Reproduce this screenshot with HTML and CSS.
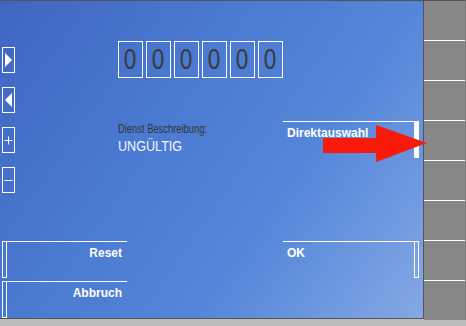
FILE: index.html
```html
<!DOCTYPE html>
<html lang="de">

<head>
    <meta charset="UTF-8">
    <meta name="viewport" content="width=device-width, initial-scale=1.0">
    <title>Dienst Eingabe</title>
    <link rel="stylesheet" href="styles.css">
</head>

<body>
    <div class="topline"></div>
    <div class="screen">
        <div class="panel">
            <div class="upper">
                <div class="side">
                    <div class="key">
                        <svg width="11" height="24" viewBox="0 0 11 24"><polygon points="2,5 9,12 2,19" fill="#fff" /></svg>
                    </div>
                    <div class="key">
                        <svg width="11" height="24" viewBox="0 0 11 24"><polygon points="9,5 2,12 9,19" fill="#fff" /></svg>
                    </div>
                    <div class="key">
                        <svg width="11" height="24" viewBox="0 0 11 24"><path d="M1.5 12.5H9.5M5.5 8.5V16.5" stroke="#fff" stroke-width="1" /></svg>
                    </div>
                    <div class="key">
                        <svg width="11" height="24" viewBox="0 0 11 24"><path d="M1.5 12.5H9.5" stroke="#fff" stroke-width="1" /></svg>
                    </div>
                </div>

                <div class="center">
                    <div class="digits">
                        <span class="digit"><span class="narrow">0</span></span>
                        <span class="digit"><span class="narrow">0</span></span>
                        <span class="digit"><span class="narrow">0</span></span>
                        <span class="digit"><span class="narrow">0</span></span>
                        <span class="digit"><span class="narrow">0</span></span>
                        <span class="digit"><span class="narrow">0</span></span>
                    </div>
                    <div class="desc">
                        <div class="desc-label"><span class="narrow">Dienst Beschreibung:</span></div>
                        <div class="desc-value"><span class="narrow">UNGÜLTIG</span></div>
                    </div>
                </div>

                <div class="btn direkt">
                    <span class="btn-label">Direktauswahl</span>
                    <span class="bar filled"></span>
                </div>
            </div>

            <div class="lower">
                <div class="btn">
                    <span class="bar"></span>
                    <span class="btn-label right">Reset</span>
                </div>
                <div class="btn">
                    <span class="btn-label">OK</span>
                    <span class="bar"></span>
                </div>
                <div class="btn">
                    <span class="bar"></span>
                    <span class="btn-label right">Abbruch</span>
                </div>
            </div>
        </div>

        <div class="softkeys">
            <div class="softkey"></div>
            <div class="softkey"></div>
            <div class="softkey"></div>
            <div class="softkey"></div>
            <div class="softkey"></div>
            <div class="softkey"></div>
            <div class="softkey"></div>
            <div class="softkey"></div>
        </div>

        <!-- hint arrow lies over the button and the softkey column -->
        <svg class="arrow" width="466" height="318" viewBox="0 0 466 318">
            <polygon points="323,137 376,137 376,124 427,142 376,161 376,152 323,152" fill="#fa1a0c" />
        </svg>
    </div>
    <div class="bottombar"></div>
</body>

</html>
```

FILE: styles.css
```css
body {
    margin: 0;
    width: 466px;
    height: 326px;
    overflow: hidden;
    background-color: #bcbcbc;
    font-family: "Liberation Sans", Arial, sans-serif;
}

.topline {
    height: 1px;
    background-color: #555;
}

.screen {
    position: relative;
    display: flex;
    height: 318px;
}

.panel {
    width: 423px;
    height: 317px;
    border-right: 1px solid #555;
    border-bottom: 1px solid #555;
    background: linear-gradient(125deg, #3f65c2 0%, #4a79d1 35%, #5486d9 65%, #84a8e4 100%);
    display: flex;
    flex-direction: column;
}

.upper {
    display: flex;
    height: 240px;
    padding-left: 2px;
}

.side {
    display: flex;
    flex-direction: column;
    gap: 14px;
    width: 13px;
    padding-top: 46px;
}

.key {
    width: 11px;
    height: 24px;
    border: 1px solid #fff;
}

.key svg {
    display: block;
}

.center {
    width: 165px;
    margin-left: 103px;
    padding-top: 40px;
}

.digits {
    display: flex;
    gap: 3px;
}

/* the device font is a condensed sans */
.narrow {
    display: inline-block;
    transform: scaleX(0.78);
    transform-origin: left center;
    white-space: nowrap;
}

.digit {
    width: 23px;
    height: 35px;
    border: 1px solid #fff;
    text-align: center;
    font-size: 29px;
    line-height: 35px;
    color: #3a3a3a;
}

.digit .narrow {
    transform-origin: center;
}

.desc {
    margin-top: 44px;
}

.desc-label {
    font-size: 12px;
    line-height: 14px;
    color: #333;
    margin-bottom: 1px;
}

.desc-value {
    font-size: 15px;
    line-height: 17px;
    color: #f4f6ff;
}

.desc-value .narrow {
    transform: scaleX(0.84);
}

.btn {
    display: flex;
    height: 36px;
    border-top: 1px solid #fff;
}

.direkt {
    width: 136px;
    margin-top: 120px;
}

.btn-label {
    flex: 1;
    padding: 4px 4px 0;
    font-size: 12px;
    font-weight: bold;
    line-height: 14px;
    color: #fff;
}

.btn-label.right {
    text-align: right;
    padding-right: 5px;
}

.bar {
    width: 3px;
    margin-top: -1px;
    border: 1px solid #fff;
}

.bar.filled {
    background-color: #fff;
}

.lower {
    display: grid;
    grid-template-columns: 125px 136px;
    grid-auto-rows: 37px;
    column-gap: 156px;
    row-gap: 3px;
    padding-left: 2px;
}

.softkeys {
    display: flex;
    flex-direction: column;
    width: 41px;
    height: 319px;
    overflow: hidden;
    border-right: 1px solid #7a7a7a;
    background-color: #888;
}

.softkey {
    flex: none;
    height: 39px;
    border-top: 1px solid #fff;
}

.softkey:first-child {
    border-top: none;
}

.arrow {
    position: absolute;
    left: 0;
    top: 0;
    pointer-events: none;
}

.bottombar {
    height: 7px;
}
```
